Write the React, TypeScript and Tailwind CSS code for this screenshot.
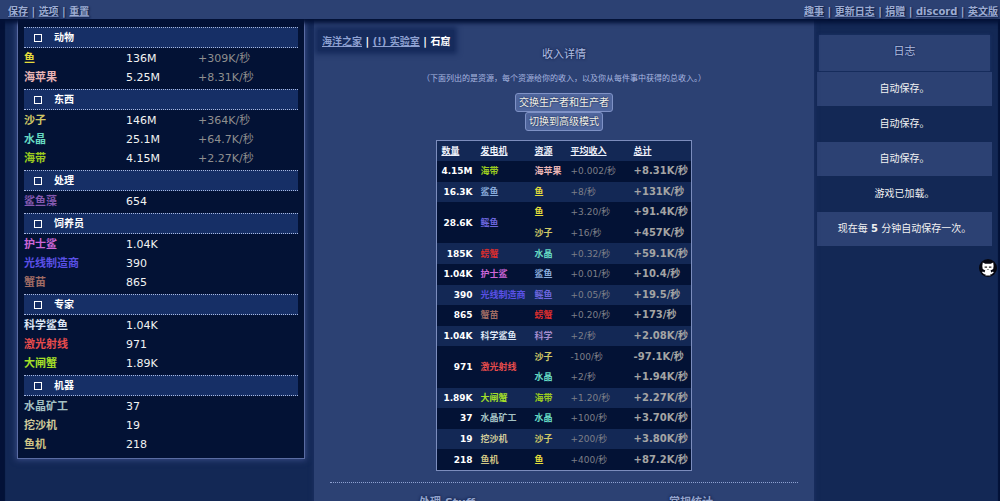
import React from "react";

type Item = { name: string; color: string; value: string; rate?: string };
type Section = { title: string; items: Item[] };

const SECTIONS: Section[] = [
  {
    title: "动物",
    items: [
      { name: "鱼", color: "text-[#e3dc3c]", value: "136M", rate: "+309K/秒" },
      { name: "海苹果", color: "text-[#e8b4b4]", value: "5.25M", rate: "+8.31K/秒" },
    ],
  },
  {
    title: "东西",
    items: [
      { name: "沙子", color: "text-[#d0c766]", value: "146M", rate: "+364K/秒" },
      { name: "水晶", color: "text-[#66d9c2]", value: "25.1M", rate: "+64.7K/秒" },
      { name: "海带", color: "text-[#9aca20]", value: "4.15M", rate: "+2.27K/秒" },
    ],
  },
  {
    title: "处理",
    items: [{ name: "鲨鱼藻", color: "text-[#8459b0]", value: "654" }],
  },
  {
    title: "饲养员",
    items: [
      { name: "护士鲨", color: "text-[#cc66d8]", value: "1.04K" },
      { name: "光线制造商", color: "text-[#5a50e6]", value: "390" },
      { name: "蟹苗", color: "text-[#a06c64]", value: "865" },
    ],
  },
  {
    title: "专家",
    items: [
      { name: "科学鲨鱼", color: "text-[#dce6f4]", value: "1.04K" },
      { name: "激光射线", color: "text-[#e84c4c]", value: "971" },
      { name: "大闸蟹", color: "text-[#a5e028]", value: "1.89K" },
    ],
  },
  {
    title: "机器",
    items: [
      { name: "水晶矿工", color: "text-[#a4c0c2]", value: "37" },
      { name: "挖沙机", color: "text-[#cfca9a]", value: "19" },
      { name: "鱼机", color: "text-[#cfc484]", value: "218" },
    ],
  },
];

type Yield = { res: string; color: string; avg: string; total: string };
type Producer = { count: string; name: string; color: string; yields: Yield[] };

const FISH = { res: "鱼", color: "text-[#e3dc3c]" };
const SAND = { res: "沙子", color: "text-[#d0c766]" };
const CRYSTAL = { res: "水晶", color: "text-[#66d9c2]" };
const KELP = { res: "海带", color: "text-[#9aca20]" };
const SHARK = { res: "鲨鱼", color: "text-[#8aacdc]" };
const RAY = { res: "鳐鱼", color: "text-[#6c66de]" };
const CRAB = { res: "螃蟹", color: "text-[#dc2e2e]" };
const APPLE = { res: "海苹果", color: "text-[#e8b4b4]" };
const SCIENCE = { res: "科学", color: "text-[#a48ccc]" };

const PRODUCERS: Producer[] = [
  { count: "4.15M", name: "海带", color: "text-[#9aca20]", yields: [{ ...APPLE, avg: "+0.002/秒", total: "+8.31K/秒" }] },
  { count: "16.3K", name: "鲨鱼", color: "text-[#8aacdc]", yields: [{ ...FISH, avg: "+8/秒", total: "+131K/秒" }] },
  {
    count: "28.6K",
    name: "鳐鱼",
    color: "text-[#6c66de]",
    yields: [
      { ...FISH, avg: "+3.20/秒", total: "+91.4K/秒" },
      { ...SAND, avg: "+16/秒", total: "+457K/秒" },
    ],
  },
  { count: "185K", name: "螃蟹", color: "text-[#dc2e2e]", yields: [{ ...CRYSTAL, avg: "+0.32/秒", total: "+59.1K/秒" }] },
  { count: "1.04K", name: "护士鲨", color: "text-[#cc66d8]", yields: [{ ...SHARK, avg: "+0.01/秒", total: "+10.4/秒" }] },
  { count: "390", name: "光线制造商", color: "text-[#5a50e6]", yields: [{ ...RAY, avg: "+0.05/秒", total: "+19.5/秒" }] },
  { count: "865", name: "蟹苗", color: "text-[#a06c64]", yields: [{ ...CRAB, avg: "+0.20/秒", total: "+173/秒" }] },
  { count: "1.04K", name: "科学鲨鱼", color: "text-[#dce6f4]", yields: [{ ...SCIENCE, avg: "+2/秒", total: "+2.08K/秒" }] },
  {
    count: "971",
    name: "激光射线",
    color: "text-[#e84c4c]",
    yields: [
      { ...SAND, avg: "-100/秒", total: "-97.1K/秒" },
      { ...CRYSTAL, avg: "+2/秒", total: "+1.94K/秒" },
    ],
  },
  { count: "1.89K", name: "大闸蟹", color: "text-[#a5e028]", yields: [{ ...KELP, avg: "+1.20/秒", total: "+2.27K/秒" }] },
  { count: "37", name: "水晶矿工", color: "text-[#a4c0c2]", yields: [{ ...CRYSTAL, avg: "+100/秒", total: "+3.70K/秒" }] },
  { count: "19", name: "挖沙机", color: "text-[#cfca9a]", yields: [{ ...SAND, avg: "+200/秒", total: "+3.80K/秒" }] },
  { count: "218", name: "鱼机", color: "text-[#cfc484]", yields: [{ ...FISH, avg: "+400/秒", total: "+87.2K/秒" }] },
];

const MESSAGES: React.ReactNode[] = [
  "自动保存。",
  "自动保存。",
  "自动保存。",
  "游戏已加载。",
  <>
    现在每 <b>5</b> 分钟自动保存一次。
  </>,
];

function LinkBar({ labels }: { labels: string[] }) {
  return (
    <nav>
      {labels.map((label, i) => (
        <React.Fragment key={label}>
          {i > 0 && " | "}
          <a href="#" className="underline decoration-[#6c7eae]">
            {label}
          </a>
        </React.Fragment>
      ))}
    </nav>
  );
}

function TopBar() {
  return (
    <header className="relative z-10 flex h-[19px] shrink-0 items-center justify-between bg-[#2c4173] pt-1 pr-0.5 pl-2 text-[10px] leading-[14px] font-bold text-[#9dacd2] shadow-[0_2px_4px_2px_#031137] [text-shadow:1px_1px_2px_#031137]">
      <LinkBar labels={["保存", "选项", "重置"]} />
      <LinkBar labels={["趣事", "更新日志", "捐赠", "discord", "英文版"]} />
    </header>
  );
}

function ResourceSection({ section }: { section: Section }) {
  return (
    <section className="pb-0.5">
      <h2 className="border-y border-dotted border-[#a9b9e0] bg-[#162f66]">
        <button type="button" className="flex h-[19px] w-full items-center gap-3 pl-2.5 text-[10px] font-bold text-white">
          <svg viewBox="0 0 8 8" className="size-2" fill="none" stroke="currentColor" aria-hidden="true">
            <rect x="0.5" y="0.5" width="7" height="7" />
          </svg>
          {section.title}
        </button>
      </h2>
      <table className="mt-px w-full table-fixed text-left text-[11px] leading-[19px]">
        <colgroup>
          <col className="w-[102px]" />
          <col className="w-[72px]" />
          <col />
        </colgroup>
        <tbody>
          {section.items.map((item) => (
            <tr key={item.name}>
              <th className={`p-0 font-bold ${item.color}`}>{item.name}</th>
              <td className="p-0 text-[#f2f2f2]">{item.value}</td>
              <td className="p-0 text-[#8f8f8f]">{item.rate}</td>
            </tr>
          ))}
        </tbody>
      </table>
    </section>
  );
}

function ResourcePanel() {
  return (
    <aside className="bg-[#132855] pr-[9px] pl-[17px] shadow-[inset_5px_0_1px_#031137]">
      <div className="border border-t-0 border-[#5a6ca3] bg-[#031235] px-[6px] pt-2 pb-0.5 shadow-[0_0_6px_1px_#3a4b86]">
        {SECTIONS.map((section) => (
          <ResourceSection key={section.title} section={section} />
        ))}
      </div>
    </aside>
  );
}

function IncomeTable() {
  return (
    <table className="mx-auto mt-[9px] h-[331px] border-separate border-spacing-0 border border-[#7c8dbd] bg-[#132855] text-left text-[9px] leading-[18px] whitespace-nowrap">
      <colgroup>
        <col className="w-[39px]" />
        <col className="w-[54px]" />
        <col className="w-[36px]" />
        <col className="w-[63px]" />
        <col className="w-[61px]" />
      </colgroup>
      <thead>
        <tr className="text-[#eef1fa]">
          {["数量", "发电机", "资源", "平均收入", "总计"].map((title) => (
            <th key={title} className="px-1 py-px font-bold underline">
              {title}
            </th>
          ))}
        </tr>
      </thead>
      <tbody>
        {PRODUCERS.map((p, i) =>
          p.yields.map((y, j) => (
            <tr key={p.name + y.res} className={i % 2 === 0 ? "bg-[#031235]" : "bg-[#132855]"}>
              {j === 0 && (
                <>
                  <td rowSpan={p.yields.length} className="px-1 py-px text-right font-bold text-white">
                    {p.count}
                  </td>
                  <td rowSpan={p.yields.length} className={`px-1 py-px font-bold ${p.color}`}>
                    {p.name}
                  </td>
                </>
              )}
              <td className={`px-1 py-px font-bold ${y.color}`}>{y.res}</td>
              <td className="px-1 py-px text-[#7d7f88]">{y.avg}</td>
              <td className="py-px pr-0.5 pl-1 text-[10px] font-bold text-[#a4a4a4]">{y.total}</td>
            </tr>
          )),
        )}
      </tbody>
    </table>
  );
}

function MainPanel() {
  const button =
    "h-[19px] rounded-[3px] border border-[#7f92c6] bg-[#4f659c] px-[3px] text-[10px] leading-[17px] text-[#f4f4ea] [text-shadow:0_0_2px_#031137]";
  return (
    <main className="relative bg-[#2c4173] px-4 shadow-[0_0_4px_1px_#1b2f62]">
      <div className="flex">
        <nav className="mt-[11px] -ml-3 bg-[#162b5c] px-1 pt-[5px] pb-0.5 text-[10px] leading-[14px] font-bold text-white shadow-[0_0_5px_3px_#162b5c]">
          <a href="#" className="text-[#8fa2d2] underline">
            海洋之家
          </a>
          {" | "}
          <a href="#" className="text-[#8fa2d2] underline">
            (!) 实验室
          </a>
          {" | "}
          <span>石窟</span>
        </nav>
      </div>
      <div className="-mt-1 flex flex-col items-center">
        <h1 className="text-[11px] leading-4 text-[#b0bee2] [text-shadow:0_0_3px_#031137]">收入详情</h1>
        <p className="mt-2 text-[8px] leading-4 text-[#a9b8e0]">
          （下面列出的是资源，每个资源给你的收入，以及你从每件事中获得的总收入。）
        </p>
        <button type="button" className={`mt-1.5 ${button}`}>
          交换生产者和生产者
        </button>
        <button type="button" className={button}>
          切换到高级模式
        </button>
      </div>
      <IncomeTable />
      <hr className="mt-[11px] border-t border-dotted border-[#8fa2d2]" />
      <div className="mt-3 grid grid-cols-2 text-center text-[11px] leading-4 font-bold text-[#93a3cc] [text-shadow:0_0_3px_#031137]">
        <h2>处理 Stuff</h2>
        <h2 className="pl-5">常规统计</h2>
      </div>
    </main>
  );
}

function GithubBadge() {
  return (
    <a href="#" aria-label="GitHub" className="absolute top-[259px] right-[3px] z-10">
      <svg viewBox="0 0 18 18" className="size-[18px]" aria-hidden="true">
        <circle cx="9" cy="9" r="9" fill="#05060f" />
        <path
          d="M3.8 3.6 6.2 4.7h5.6l2.4-1.1.4 3.3-.4 3.2-2.7 1.5.9 1.8 1.5-1 .9.9-2.1 1.9-1.4.1.2 1.3H6.4l.1-1.3-1.4-.1-2.1-1.9.9-.9 1.5 1 .9-1.8-2.6-1.5-.4-3.2z"
          fill="#fff"
        />
        <path d="M5.6 7.6h2.5v1.1H5.6zM9.9 7.6h2.5v1.1H9.9zM8.4 10.3h1.2v.6H8.4z" fill="#222" />
      </svg>
    </a>
  );
}

function LogPanel() {
  return (
    <aside className="bg-[#132855] pt-4 pr-2 pl-[3px] text-center shadow-[inset_-2px_0_1px_#031137]">
      <h2 className="mx-0.5 mb-px h-[36px] bg-[#2c4173] text-[11px] leading-[34px] text-[#b0bee2] shadow-[0_0_3px_#1f356b] [text-shadow:0_0_2px_#031137]">
        日志
      </h2>
      <ul className="text-[10px] leading-[34px] text-[#f2f2f2]">
        {MESSAGES.map((message, i) => (
          <li key={i} className="mb-px odd:bg-[#2c4173]">
            {message}
          </li>
        ))}
      </ul>
    </aside>
  );
}

export default function App() {
  return (
    <div className="relative flex h-screen flex-col overflow-hidden bg-[#132855] font-['DejaVu_Sans','Noto_Sans_CJK_SC',sans-serif]">
      <TopBar />
      <div className="grid grow grid-cols-[314px_minmax(0,1fr)_186px]">
        <ResourcePanel />
        <MainPanel />
        <LogPanel />
      </div>
      <GithubBadge />
    </div>
  );
}
